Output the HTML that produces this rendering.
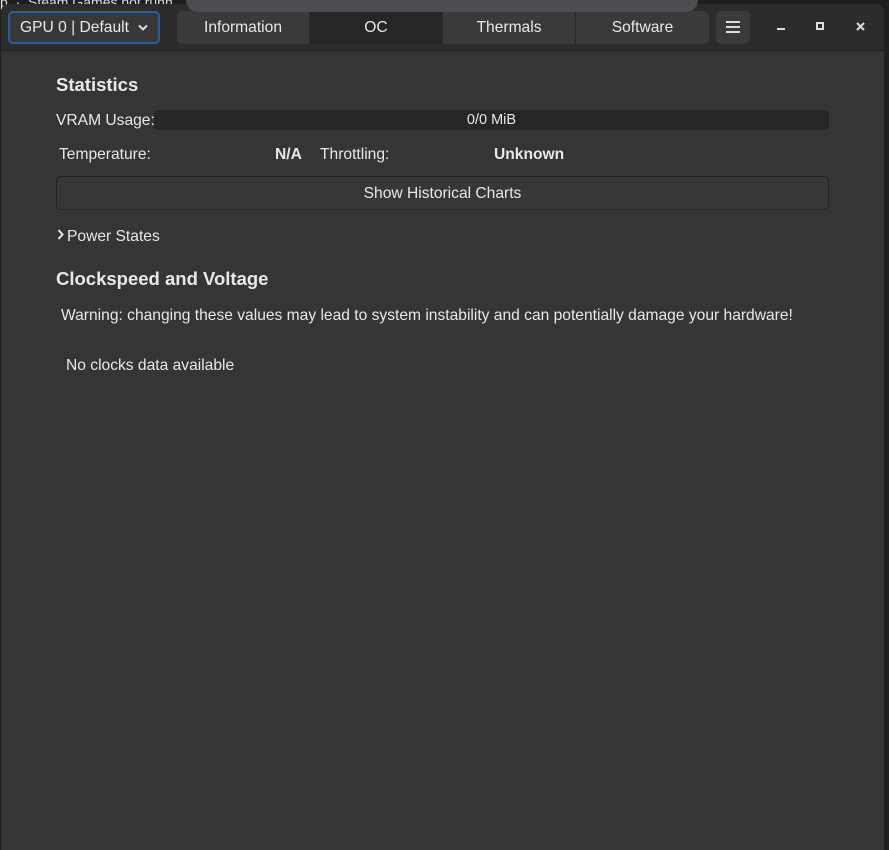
<!DOCTYPE html>
<html><head><meta charset="utf-8"><style>
*{margin:0;padding:0;box-sizing:border-box}
body{width:889px;height:850px;background:#1e1e1e;font-family:"Liberation Sans","DejaVu Sans",sans-serif;color:#e8e8e8;font-size:15.6px;position:relative;overflow:hidden}
.win{position:absolute;left:1px;top:4px;width:883px;height:846px;background:#353535;border-radius:8px 8px 0 0;overflow:hidden}
.hdr{position:absolute;left:0;top:0;width:883px;height:47px;background:#2c2c2c;border-bottom:1px solid #1f1f1f}
.ab{position:absolute}
.gpu{left:7px;top:7px;width:152px;height:33px;border:2px solid #2c5d9c;border-radius:5px;background:#383838;line-height:30px;padding-left:10px}
.tabs{left:176px;top:7px;width:532px;height:33px;border-radius:5px;background:#3a3a3a;display:flex;overflow:hidden}
.tabs div{width:133px;text-align:center;line-height:34px;border-right:1px solid #2a2a2a}
.tabs .sel{background:#262626}
.menu{left:715px;top:7px;width:34px;height:33px;background:#3a3a3a;border-radius:5px}
.pop{position:absolute;left:186px;top:-10px;width:512px;height:22px;background:#4d4d52;border-radius:0 0 12px 12px}
.h{font-weight:bold;font-size:18.5px}
</style></head><body>
<div class="ab" style="left:0;top:-6px;font-size:14px;color:#ddd">p &nbsp;· &nbsp;Steam Games not runn</div>
<div class="win">
<div class="hdr">
<div class="ab gpu">GPU 0 | Default <svg style="position:absolute;right:10px;top:11px" width="10" height="7" viewBox="0 0 10 7"><path d="M1 1.5L5 5.5L9 1.5" stroke="#ddd" stroke-width="2" fill="none"/></svg></div>
<div class="ab tabs"><div>Information</div><div class="sel">OC</div><div>Thermals</div><div style="border:none">Software</div></div>
<div class="ab menu"><div style="position:absolute;left:10px;top:10px;width:14px;height:2px;background:#ddd;box-shadow:0 5px #ddd,0 10px #ddd"></div></div>
<div class="ab" style="left:776px;top:24px;width:8px;height:2px;background:#ddd"></div>
<div class="ab" style="left:815px;top:18px;width:8px;height:8px;border:2px solid #ddd"></div>
<svg class="ab" style="left:855px;top:18px" width="9" height="9" viewBox="0 0 9 9"><path d="M1 1L8 8M8 1L1 8" stroke="#ddd" stroke-width="2"/></svg>
</div>
<div class="ab h" style="left:55px;top:70px">Statistics</div>
<div class="ab" style="left:55px;top:108px">VRAM Usage:</div>
<div class="ab" style="left:153px;top:106px;width:675px;height:20px;background:#262626;border-radius:4px;text-align:center;line-height:21px;font-size:14.5px">0/0 MiB</div>
<div class="ab" style="left:58px;top:142px">Temperature:</div>
<div class="ab" style="left:274px;top:142px;font-weight:bold">N/A</div>
<div class="ab" style="left:319px;top:142px">Throttling:</div>
<div class="ab" style="left:493px;top:142px;font-weight:bold">Unknown</div>
<div class="ab" style="left:55px;top:172px;width:773px;height:34px;border:1px solid #232323;border-radius:5px;background:#373737;text-align:center;line-height:33px">Show Historical Charts</div>
<svg class="ab" style="left:56px;top:225px" width="7" height="11" viewBox="0 0 7 11"><path d="M1.5 1L5.5 5.5L1.5 10" stroke="#e8e8e8" stroke-width="2" fill="none"/></svg>
<div class="ab" style="left:66px;top:224px">Power States</div>
<div class="ab h" style="left:55px;top:264px">Clockspeed and Voltage</div>
<div class="ab" style="left:60px;top:303px">Warning: changing these values may lead to system instability and can potentially damage your hardware!</div>
<div class="ab" style="left:65px;top:353px">No clocks data available</div>
</div>
<div class="pop"></div>
</body></html>
